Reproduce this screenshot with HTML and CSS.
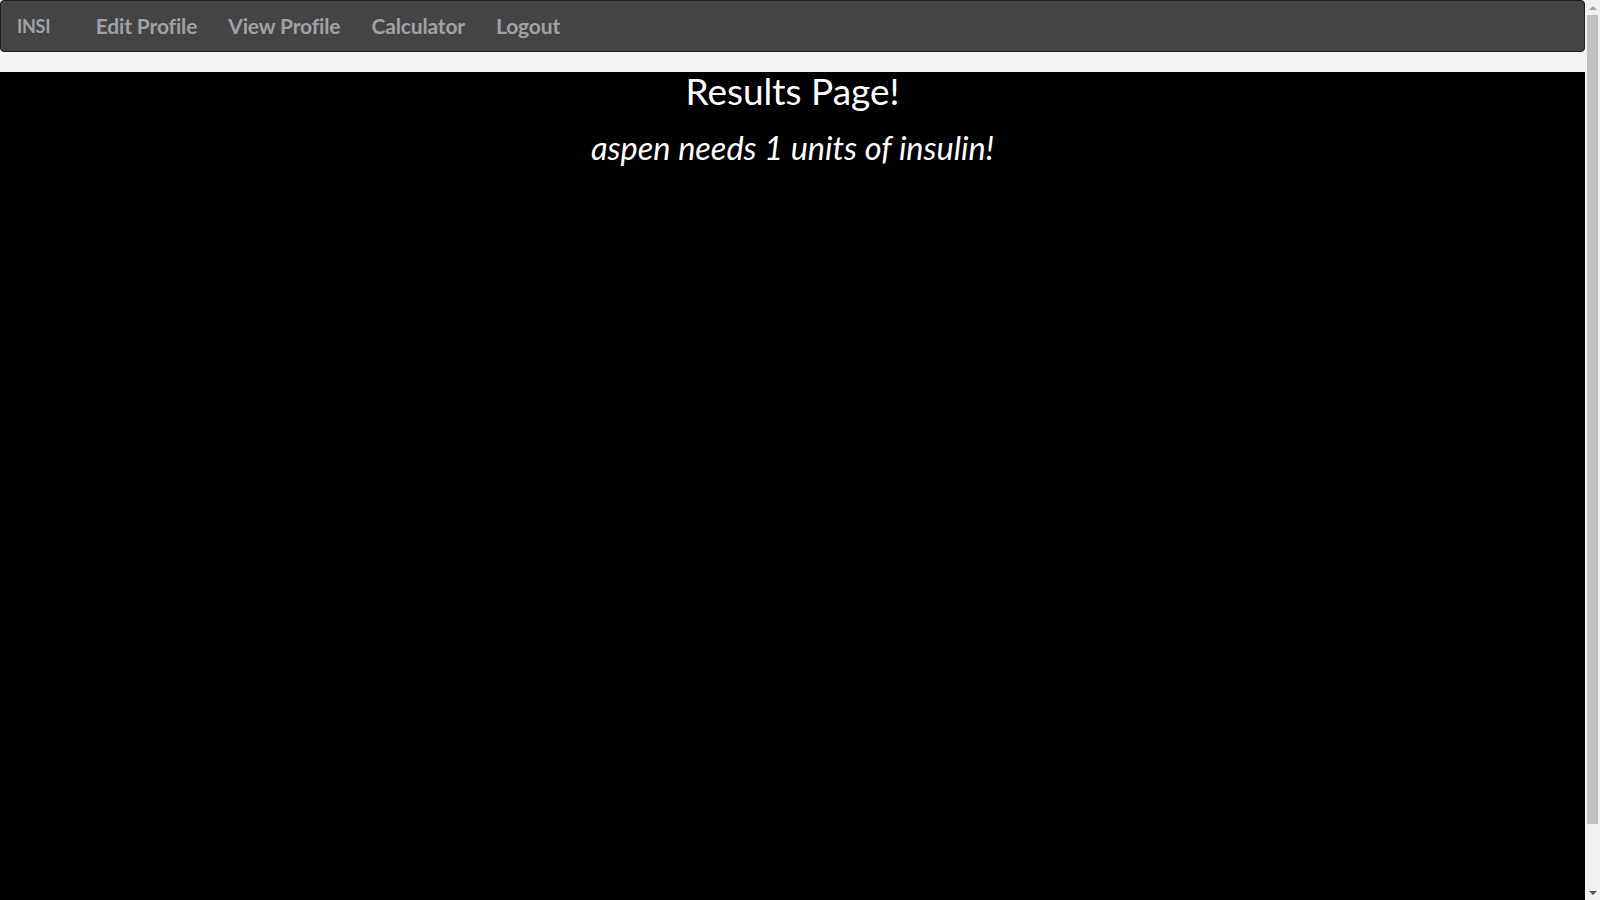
FILE: index.html
```html
<!DOCTYPE html>
<html lang="en">
<head>
<meta charset="utf-8">
<title>Results</title>
<link rel="stylesheet" href="styles.css">
</head>
<body>
<nav class="navbar">
  <a class="brand" href="#">INSI</a>
  <ul class="nav-links">
    <li><a href="#">Edit Profile</a></li>
    <li><a href="#">View Profile</a></li>
    <li><a href="#">Calculator</a></li>
    <li><a href="#">Logout</a></li>
  </ul>
</nav>
<main class="results">
  <h1 class="title">Results Page!</h1>
  <h2 class="message">aspen needs 1 units of insulin!</h2>
</main>
<div class="scrollbar" aria-hidden="true">
  <span class="sb-arrow sb-up"></span>
  <span class="sb-track"><span class="sb-thumb"></span></span>
  <span class="sb-arrow sb-down"></span>
</div>
</body>
</html>
```
FILE: styles.css
```css
html, body {
  margin: 0;
  padding: 0;
}
body {
  background: #f4f4f4;
  font-family: "Lato", "Noto Sans", sans-serif;
  margin-right: 15px;
}
.navbar {
  display: flex;
  align-items: center;
  height: 50px;
  background: #444444;
  border: 1px solid #1e1e1e;
  border-radius: 4px;
  margin-bottom: 20px;
}
.brand {
  color: #9ea3a8;
  text-decoration: none;
  font-size: 18px;
  font-weight: 700;
  padding: 0 15px 0 16px;
  line-height: 50px;
  letter-spacing: -0.3px;
}
.nav-links {
  list-style: none;
  display: flex;
  margin: 0 0 0 15px;
  padding: 0;
}
.nav-links a {
  display: block;
  color: #9ea3a8;
  text-decoration: none;
  font-size: 21px;
  font-weight: 700;
  padding: 0 15.5px;
  line-height: 50px;
  letter-spacing: -0.15px;
}
.results {
  background: #000;
  color: #fff;
  text-align: center;
  min-height: 898px;
  padding-top: 1px;
}
.title {
  font-family: "Lato", sans-serif;
  font-weight: 400;
  font-size: 37px;
  line-height: 1.1;
  margin: -2px 0 0;
}
.message {
  font-family: "Lato", sans-serif;
  font-style: italic;
  font-weight: 400;
  font-size: 32.5px;
  line-height: 1.1;
  margin: 18px 0 0;
}

/* fake browser scrollbar overlaying the right edge */
.scrollbar {
  position: fixed;
  top: 0;
  right: 0;
  width: 15px;
  height: 100vh;
  background: #f1f1f1;
  display: flex;
  flex-direction: column;
}
.sb-arrow {
  height: 15px;
  flex: none;
  display: flex;
  align-items: center;
  justify-content: center;
}
.sb-arrow::before {
  content: "";
  width: 0;
  height: 0;
  border-left: 4px solid transparent;
  border-right: 4px solid transparent;
}
.sb-up::before {
  border-bottom: 4px solid #a3a3a3;
}
.sb-down::before {
  border-top: 4px solid #505050;
}
.sb-track {
  flex: 1;
  display: flex;
  flex-direction: column;
}
.sb-thumb {
  height: 93%;
  margin: 0 2px;
  background: #c1c1c1;
}
```
